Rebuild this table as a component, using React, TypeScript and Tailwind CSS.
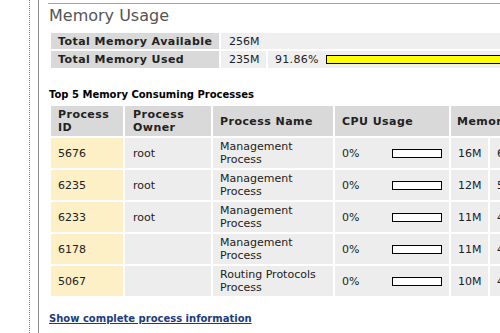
type Proc = {
  pid: string
  owner: string
  name: [string, string]
  cpu: string
  mem: string
  memPct: string
}

const processes: Proc[] = [
  { pid: '5676', owner: 'root', name: ['Management', 'Process'], cpu: '0%', mem: '16M', memPct: '6.25%' },
  { pid: '6235', owner: 'root', name: ['Management', 'Process'], cpu: '0%', mem: '12M', memPct: '5.07%' },
  { pid: '6233', owner: 'root', name: ['Management', 'Process'], cpu: '0%', mem: '11M', memPct: '4.60%' },
  { pid: '6178', owner: '', name: ['Management', 'Process'], cpu: '0%', mem: '11M', memPct: '4.58%' },
  { pid: '5067', owner: '', name: ['Routing Protocols', 'Process'], cpu: '0%', mem: '10M', memPct: '4.21%' },
]

function UsageBar({ width, fill = 0, color = 'bg-[#ffff00]' }: { width: number; fill?: number; color?: string }) {
  return (
    <div className="h-[9px] shrink-0 border border-black bg-white" style={{ width }}>
      <div className={`h-full ${color}`} style={{ width: `${fill}%` }} />
    </div>
  )
}

export default function App() {
  return (
    <div className="w-[500px] h-[333px] overflow-hidden bg-white flex font-['DejaVu_Sans',Verdana,sans-serif] text-[#222]">
      {/* left rails */}
      <div className="w-[29px] shrink-0" />
      <div className="w-0 shrink-0 border-l border-dotted border-[#777]" />
      <div className="w-[8px] shrink-0" />
      <div className="w-px shrink-0 bg-[#8c8c8c]" />

      <div className="pl-[10px] pt-[3px] w-[620px] shrink-0">
        <div className="h-px -ml-[1px] bg-[#a5a5a5]" />
        <h1 className="mt-[2px] text-[16px] leading-[20px] text-[#555]">Memory Usage</h1>

        <table className="mt-[5px] w-[560px] table-fixed border-separate border-spacing-[2px] text-[11px] leading-[13px]">
          <colgroup>
            <col className="w-[168px]" />
            <col className="w-[45px]" />
            <col />
          </colgroup>
          <tbody>
            <tr>
              <td className="h-[16px] bg-[#d9d9d9] pl-[7px] font-bold tracking-[0.45px] whitespace-nowrap">Total Memory Available</td>
              <td colSpan={2} className="bg-[#efefef] pl-[8px]">256M</td>
            </tr>
            <tr>
              <td className="h-[17px] bg-[#d9d9d9] pl-[7px] font-bold tracking-[0.45px] whitespace-nowrap">Total Memory Used</td>
              <td className="bg-[#efefef] pl-[8px]">235M</td>
              <td className="bg-[#efefef] pl-[7px]">
                <div className="flex items-center gap-[7px]">
                  <span className="tracking-[0.3px]">91.86%</span>
                  <UsageBar width={300} fill={100} />
                </div>
              </td>
            </tr>
          </tbody>
        </table>

        <p className="mt-[19px] text-[10px] leading-[12px] font-bold text-black">
          Top 5 Memory Consuming Processes
        </p>

        <table className="mt-[3px] w-[520px] table-fixed border-separate border-spacing-[2px] text-[11px] leading-[13px]">
          <colgroup>
            <col className="w-[72px]" />
            <col className="w-[86px]" />
            <col className="w-[120px]" />
            <col className="w-[114px]" />
            <col className="w-[37px]" />
            <col />
          </colgroup>
          <thead>
            <tr className="text-left">
              <th className="h-[30px] bg-[#d9d9d9] pl-[7px] font-bold tracking-[0.45px]">Process<br />ID</th>
              <th className="bg-[#d9d9d9] pl-[8px] font-bold tracking-[0.45px]">Process<br />Owner</th>
              <th className="bg-[#d9d9d9] pl-[7px] font-bold tracking-[0.45px]">Process Name</th>
              <th className="bg-[#d9d9d9] pl-[7px] font-bold tracking-[0.45px]">CPU Usage</th>
              <th colSpan={2} className="bg-[#d9d9d9] pl-[6px] font-bold tracking-[0.45px] whitespace-nowrap">Memory Usage</th>
            </tr>
          </thead>
          <tbody>
            {processes.map((p) => (
              <tr key={p.pid}>
                <td className="h-[30px] bg-[#fdefc6] pl-[7px]">{p.pid}</td>
                <td className="bg-[#ededed] pl-[8px]">{p.owner}</td>
                <td className="bg-[#ededed] pl-[7px] whitespace-nowrap">
                  {p.name[0]}
                  <br />
                  {p.name[1]}
                </td>
                <td className="bg-[#ededed] pl-[7px]">
                  <div className="flex items-center justify-between pr-[7px]">
                    <span>{p.cpu}</span>
                    <UsageBar width={50} fill={0} />
                  </div>
                </td>
                <td className="bg-[#ededed] pl-[7px]">{p.mem}</td>
                <td className="bg-[#ededed] pl-[7px] whitespace-nowrap">{p.memPct}</td>
              </tr>
            ))}
          </tbody>
        </table>

        <a href="#" className="block mt-[15px] text-[10px] leading-[12px] font-bold text-[#1b3c7d] underline">
          Show complete process information
        </a>
      </div>
    </div>
  )
}
